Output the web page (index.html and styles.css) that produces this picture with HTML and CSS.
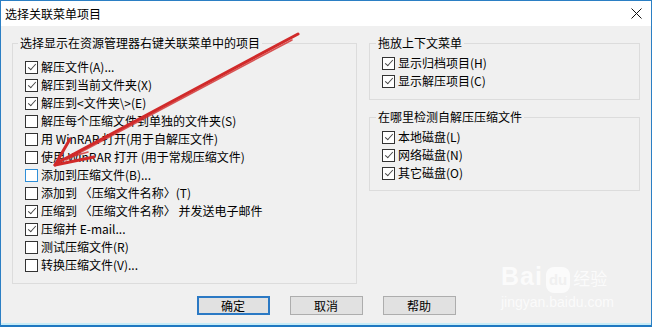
FILE: index.html
```html
<!DOCTYPE html>
<html lang="zh-CN">
<head>
<meta charset="utf-8">
<title>选择关联菜单项目</title>
<link rel="stylesheet" href="styles.css">
</head>
<body>
<div class="window">
  <div class="titlebar">
    <span class="title">选择关联菜单项目</span>
    <svg class="close" width="11" height="11" viewBox="0 0 11 11"><path d="M0.5 0.5L10.5 10.5M10.5 0.5L0.5 10.5" stroke="#111" stroke-width="1"/></svg>
  </div>
  <div class="content">
    <div class="columns">
      <fieldset class="group group-left">
        <legend>选择显示在资源管理器右键关联菜单中的项目</legend>
        <div class="row"><span class="box checked"></span>解压文件(A)...</div>
        <div class="row"><span class="box checked"></span>解压到当前文件夹(X)</div>
        <div class="row"><span class="box checked"></span>解压到&lt;文件夹\&gt;(E)</div>
        <div class="row"><span class="box"></span>解压每个压缩文件到单独的文件夹(S)</div>
        <div class="row"><span class="box"></span>用 WinRAR 打开(用于自解压文件)</div>
        <div class="row"><span class="box"></span>使用 WinRAR 打开 (用于常规压缩文件)</div>
        <div class="row"><span class="box hot"></span>添加到压缩文件(B)...</div>
        <div class="row"><span class="box"></span>添加到 〈压缩文件名称〉(T)</div>
        <div class="row"><span class="box checked"></span>压缩到 〈压缩文件名称〉 并发送电子邮件</div>
        <div class="row"><span class="box checked"></span>压缩并 E-mail...</div>
        <div class="row"><span class="box"></span>测试压缩文件(R)</div>
        <div class="row"><span class="box"></span>转换压缩文件(V)...</div>
      </fieldset>
      <div class="right">
        <fieldset class="group group-drag">
          <legend>拖放上下文菜单</legend>
          <div class="row"><span class="box checked"></span>显示归档项目(H)</div>
          <div class="row"><span class="box checked"></span>显示解压项目(C)</div>
        </fieldset>
        <fieldset class="group group-sfx">
          <legend>在哪里检测自解压压缩文件</legend>
          <div class="row"><span class="box checked"></span>本地磁盘(L)</div>
          <div class="row"><span class="box checked"></span>网络磁盘(N)</div>
          <div class="row"><span class="box checked"></span>其它磁盘(O)</div>
        </fieldset>
      </div>
    </div>
    <div class="buttons">
      <button class="btn default">确定</button>
      <button class="btn">取消</button>
      <button class="btn">帮助</button>
    </div>
  </div>
  <div class="watermark">
    <div class="wm-logo"><span class="wm-bai">Bai</span><span class="wm-du">du</span><span class="wm-jy">经验</span></div>
    <div class="wm-url">jingyan.baidu.com</div>
  </div>
  <svg class="arrow" width="652" height="327" viewBox="0 0 652 327">
    <g fill="none" stroke="#d12a2a" stroke-linecap="round" stroke-linejoin="round">
      <path d="M298 34 L57 163" stroke-width="3"/>
      <path d="M292 40 L66 160" stroke-width="1.6" opacity="0.8"/>
      <path d="M55 165 L70 139" stroke-width="3"/>
      <path d="M55 165 L94 157" stroke-width="3"/>
      <path d="M60 160 L88 152" stroke-width="1.6" opacity="0.8"/>
    </g>
  </svg>
</div>
</body>
</html>
```

FILE: styles.css
```css
html, body {
  margin: 0;
  padding: 0;
}

body {
  width: 652px;
  height: 327px;
  overflow: hidden;
  background: #f0f0f0;
  font-family: "Noto Sans CJK SC", "Microsoft YaHei", sans-serif;
  font-size: 12px;
  color: #000;
}

.window {
  position: relative;
  box-sizing: border-box;
  width: 652px;
  height: 327px;
  border: 1px solid #2b7fc4;
  border-bottom: 2px solid #1f78c1;
  box-shadow: inset 0 -2px 0 #c6ecf7;
  background: #f0f0f0;
}

.titlebar {
  height: 25px;
  background: #ffffff;
  display: flex;
  align-items: center;
  justify-content: space-between;
  padding: 0 9px 0 4px;
}

.title {
  font-size: 12px;
  line-height: 16px;
}

.close {
  display: block;
}

.content {
  padding: 9px 0 0 11px;
}

.columns {
  display: flex;
  gap: 12px;
  align-items: flex-start;
}

.group {
  margin: 0;
  border: 1px solid #dcdcdc;
  min-width: 0;
}

.group legend {
  padding: 0 2px;
  line-height: 16px;
  font-size: 12px;
}

.group-left {
  width: 345px;
  box-sizing: border-box;
  padding: 7px 0 9px 12px;
}

.group-left legend {
  margin-left: -7px;
}

.right {
  width: 271px;
  display: flex;
  flex-direction: column;
  gap: 9px;
}

.group-drag {
  padding: 3px 0 9px 12px;
}

.group-sfx {
  padding: 3px 0 8px 12px;
}

.right legend {
  margin-left: -6px;
}

.row {
  display: flex;
  align-items: center;
  height: 18px;
  line-height: 18px;
  white-space: nowrap;
}

.box {
  position: relative;
  box-sizing: border-box;
  width: 13px;
  height: 13px;
  border: 1px solid #333333;
  background: #ffffff;
  margin-right: 3px;
  flex: none;
}

.box.hot {
  border-color: #2f8fd8;
}

.box.checked::after {
  content: "";
  position: absolute;
  left: 3.5px;
  top: 0.5px;
  width: 3px;
  height: 7px;
  border: solid #444444;
  border-width: 0 1.2px 1.2px 0;
  transform: rotate(42deg);
}

.buttons {
  display: flex;
  justify-content: center;
  gap: 20px;
  margin-top: 12px;
  padding-right: 11px;
}

.btn {
  box-sizing: border-box;
  width: 73px;
  height: 19px;
  padding: 0;
  margin: 0;
  font-family: "Noto Sans CJK SC", "Microsoft YaHei", sans-serif;
  font-size: 12px;
  line-height: 16px;
  color: #000;
  background: #e1e1e1;
  border: 1px solid #adadad;
  border-radius: 0;
}

.btn.default {
  border: 1px solid #2b79c4;
  box-shadow: inset 0 0 0 1px #2b79c4;
}

.watermark {
  position: absolute;
  left: 500px;
  top: 262px;
  color: #ffffff;
  opacity: 0.75;
  pointer-events: none;
}

.wm-logo {
  display: flex;
  align-items: baseline;
  font-family: "Liberation Sans", Arial, sans-serif;
  font-weight: bold;
  line-height: 26px;
}

.wm-bai {
  font-size: 25px;
  letter-spacing: 1px;
}

.wm-du {
  font-size: 15px;
  margin-left: 3px;
  padding: 0 3px;
  border-radius: 8px;
  background: #ffffff;
  color: #f0f0f0;
}

.wm-jy {
  font-family: "Noto Sans CJK SC", sans-serif;
  font-size: 17px;
  font-weight: normal;
  margin-left: 3px;
}

.wm-url {
  font-family: "Liberation Sans", Arial, sans-serif;
  font-size: 14px;
  line-height: 18px;
}

.arrow {
  position: absolute;
  left: -1px;
  top: -1px;
  pointer-events: none;
}
```
